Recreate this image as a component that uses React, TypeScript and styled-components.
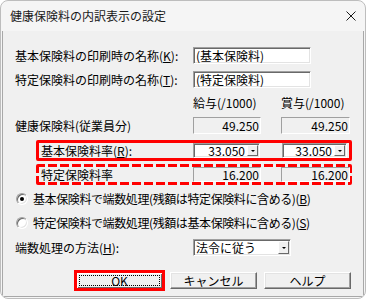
import styled, { createGlobalStyle } from 'styled-components';

const font = `"Noto Sans CJK JP", "Noto Sans", "DejaVu Sans", sans-serif`;

const GlobalStyle = createGlobalStyle`
  html, body {
    margin: 0;
    padding: 0;
    background: #ffffff;
  }
  body {
    font-family: ${font};
  }
`;

const Window = styled.div`
  box-sizing: border-box;
  width: 366px;
  height: 299px;
  display: flex;
  flex-direction: column;
  background: #f5f5f5;
  border: 1px solid #bdbdbd;
  border-radius: 8px;
  overflow: hidden;
  padding: 0 1px 1px;
  font-family: ${font};
  font-size: 12px;
  color: #000;
`;

const TitleBar = styled.div`
  flex: none;
  height: 30px;
  display: flex;
  align-items: center;
  justify-content: space-between;
  padding: 0 8px 0 8px;
`;

const Title = styled.span`
  font-size: 12px;
  line-height: 14px;
  color: #1a1a1a;
`;

const Client = styled.div`
  flex: 1;
  display: flex;
  flex-direction: column;
  background: #f0f0f0;
  border: 1px solid #a8a8a8;
  border-top: none;
  padding: 16px 12px 0;
`;

const Row = styled.div<{ $mt: number; $cols: string; $h?: number }>`
  display: grid;
  grid-template-columns: ${({ $cols }) => $cols};
  align-items: center;
  height: ${({ $h }) => $h ?? 17}px;
  margin-top: ${({ $mt }) => $mt}px;
`;

const Label = styled.span`
  white-space: nowrap;
  line-height: 15px;
`;

const sunken = `
  box-sizing: border-box;
  border: 1px solid;
  border-color: #a0a0a0 #ffffff #ffffff #a0a0a0;
  box-shadow: inset 1px 1px 0 #696969, inset -1px -1px 0 #e3e3e3;
`;

const TextField = styled.div`
  ${sunken}
  height: 17px;
  background: #fff;
  padding: 0 2px;
  line-height: 15px;
  white-space: nowrap;
  overflow: hidden;
`;

const ReadOnlyField = styled.div<{ $h?: number }>`
  box-sizing: border-box;
  height: ${({ $h }) => $h ?? 17}px;
  border: 1px solid;
  border-color: #a0a0a0 #ffffff #ffffff #a0a0a0;
  text-align: right;
  padding-right: 1px;
  line-height: ${({ $h }) => ($h ?? 17) - 2}px;
`;

const HeaderText = styled.span`
  white-space: nowrap;
  line-height: 14px;
`;

const dash = (dir: string) =>
  `repeating-linear-gradient(${dir}, #ff0000 0 9px, transparent 9px 12px)`;

const Highlight = styled.div<{ $dashed?: boolean; $mt: number; $cols: string }>`
  box-sizing: border-box;
  display: grid;
  grid-template-columns: ${({ $cols }) => $cols};
  align-items: center;
  margin: ${({ $mt }) => $mt}px 0 0 21px;
  width: 316px;
  height: 21px;
  padding-left: 2px;
  border: 3px solid ${({ $dashed }) => ($dashed ? 'transparent' : '#ff0000')};
  border-radius: 2px;
  background: ${({ $dashed }) =>
    $dashed
      ? `${dash('90deg')} top left / 100% 3px no-repeat border-box,
         ${dash('90deg')} bottom left / 100% 3px no-repeat border-box,
         ${dash('180deg')} top left / 3px 100% no-repeat border-box,
         ${dash('180deg')} top right / 3px 100% no-repeat border-box`
      : 'none'};
`;

const Combo = styled.div<{ $h?: number; $align?: 'left' | 'right' }>`
  ${sunken}
  display: flex;
  align-items: stretch;
  height: ${({ $h }) => $h ?? 15}px;
  background: #fff;
  padding: 0 1px 0 0;
  text-align: ${({ $align }) => $align ?? 'right'};
  line-height: ${({ $h }) => ($h ?? 15) - 2}px;
`;

const ComboValue = styled.span`
  flex: 1;
  padding: 0 2px;
  white-space: nowrap;
`;

const DropButton = styled.span`
  box-sizing: border-box;
  flex: none;
  width: 11px;
  margin: 1px 0;
  background: #f0f0f0;
  border: 1px solid;
  border-color: #ffffff #696969 #696969 #ffffff;
  display: flex;
  align-items: center;
  justify-content: center;

  &::after {
    content: '';
    width: 0;
    height: 0;
    border-left: 2px solid transparent;
    border-right: 2px solid transparent;
    border-top: 2px solid #000;
  }
`;

const RadioRow = styled.label<{ $mt: number }>`
  display: flex;
  align-items: center;
  gap: 5px;
  height: 14px;
  margin-top: ${({ $mt }) => $mt}px;
  padding-left: 1px;
  white-space: nowrap;
  line-height: 14px;
  letter-spacing: -0.4px;
`;

const RadioCircle = styled.span<{ $checked?: boolean }>`
  box-sizing: border-box;
  flex: none;
  position: relative;
  width: 12px;
  height: 12px;
  border-radius: 50%;
  background: #fff;
  border: 1px solid;
  border-color: #a0a0a0 #ffffff #ffffff #a0a0a0;
  box-shadow: inset 1px 1px 0 #696969, inset -1px -1px 0 #e3e3e3;

  &::after {
    content: '';
    display: ${({ $checked }) => ($checked ? 'block' : 'none')};
    position: absolute;
    left: 3px;
    top: 3px;
    width: 4px;
    height: 4px;
    border-radius: 50%;
    background: #000;
  }
`;

const ButtonBar = styled.div`
  display: flex;
  justify-content: flex-end;
  gap: 7px;
  margin-top: 16px;
`;

const Button = styled.button<{ $default?: boolean; $marked?: boolean }>`
  box-sizing: border-box;
  position: relative;
  display: flex;
  align-items: center;
  justify-content: center;
  width: 87px;
  height: 17px;
  padding: 0;
  font-family: ${font};
  font-size: 12px;
  line-height: 13px;
  color: #000;
  background: #f0f0f0;
  border: 1px solid;
  border-color: ${({ $default }) =>
    $default ? '#000' : '#ffffff #696969 #696969 #ffffff'};
  box-shadow: ${({ $default }) =>
    $default
      ? 'inset 1px 1px 0 #fff, inset -1px -1px 0 #696969'
      : 'inset -1px -1px 0 #a0a0a0, inset 1px 1px 0 #e3e3e3'};
  outline: ${({ $marked }) => ($marked ? '3px solid #ff0000' : 'none')};
  outline-offset: -1px;

  &::before {
    content: '';
    display: ${({ $default }) => ($default ? 'block' : 'none')};
    position: absolute;
    inset: 2px;
    border: 1px dotted #000;
  }
`;

const Mn = styled.u`
  text-decoration: underline;
  text-underline-offset: 1px;
`;

const CloseIcon = () => (
  <svg width="10" height="10" viewBox="0 0 10 10">
    <path d="M0.5 0.5 L9.5 9.5 M9.5 0.5 L0.5 9.5" stroke="#1a1a1a" strokeWidth="1" fill="none" />
  </svg>
);

export default function App() {
  return (
    <>
      <GlobalStyle />
      <Window>
        <TitleBar>
          <Title>健康保険料の内訳表示の設定</Title>
          <CloseIcon />
        </TitleBar>
        <Client>
          <Row $mt={0} $cols="178px 118px">
            <Label>
              基本保険料の印刷時の名称(<Mn>K</Mn>):
            </Label>
            <TextField>(基本保険料)</TextField>
          </Row>
          <Row $mt={7} $cols="178px 118px">
            <Label>
              特定保険料の印刷時の名称(<Mn>T</Mn>):
            </Label>
            <TextField>(特定保険料)</TextField>
          </Row>
          <Row $mt={8} $h={14} $cols="178px 88px auto">
            <span />
            <HeaderText>給与(/1000)</HeaderText>
            <HeaderText>賞与(/1000)</HeaderText>
          </Row>
          <Row $mt={7} $cols="178px 68px 20px 69px">
            <Label>健康保険料(従業員分)</Label>
            <ReadOnlyField>49.250</ReadOnlyField>
            <span />
            <ReadOnlyField>49.250</ReadOnlyField>
          </Row>
          <Highlight $mt={6} $cols="152px 67px 22px 65px">
            <Label>
              基本保険料率(<Mn>R</Mn>):
            </Label>
            <Combo>
              <ComboValue>33.050</ComboValue>
              <DropButton />
            </Combo>
            <span />
            <Combo>
              <ComboValue>33.050</ComboValue>
              <DropButton />
            </Combo>
          </Highlight>
          <Highlight $dashed $mt={3} $cols="152px 68px 20px 69px">
            <Label>特定保険料率</Label>
            <ReadOnlyField $h={15}>16.200</ReadOnlyField>
            <span />
            <ReadOnlyField $h={15}>16.200</ReadOnlyField>
          </Highlight>
          <RadioRow $mt={7}>
            <RadioCircle $checked />
            <span>
              基本保険料で端数処理(残額は特定保険料に含める)(<Mn>B</Mn>)
            </span>
          </RadioRow>
          <RadioRow $mt={10}>
            <RadioCircle />
            <span>
              特定保険料で端数処理(残額は基本保険料に含める)(<Mn>S</Mn>)
            </span>
          </RadioRow>
          <Row $mt={9} $cols="178px 98px">
            <Label>
              端数処理の方法(<Mn>H</Mn>):
            </Label>
            <Combo $h={17} $align="left">
              <ComboValue>法令に従う</ComboValue>
              <DropButton />
            </Combo>
          </Row>
          <ButtonBar>
            <Button $default $marked>OK</Button>
            <Button>キャンセル</Button>
            <Button>ヘルプ</Button>
          </ButtonBar>
        </Client>
      </Window>
    </>
  );
}
